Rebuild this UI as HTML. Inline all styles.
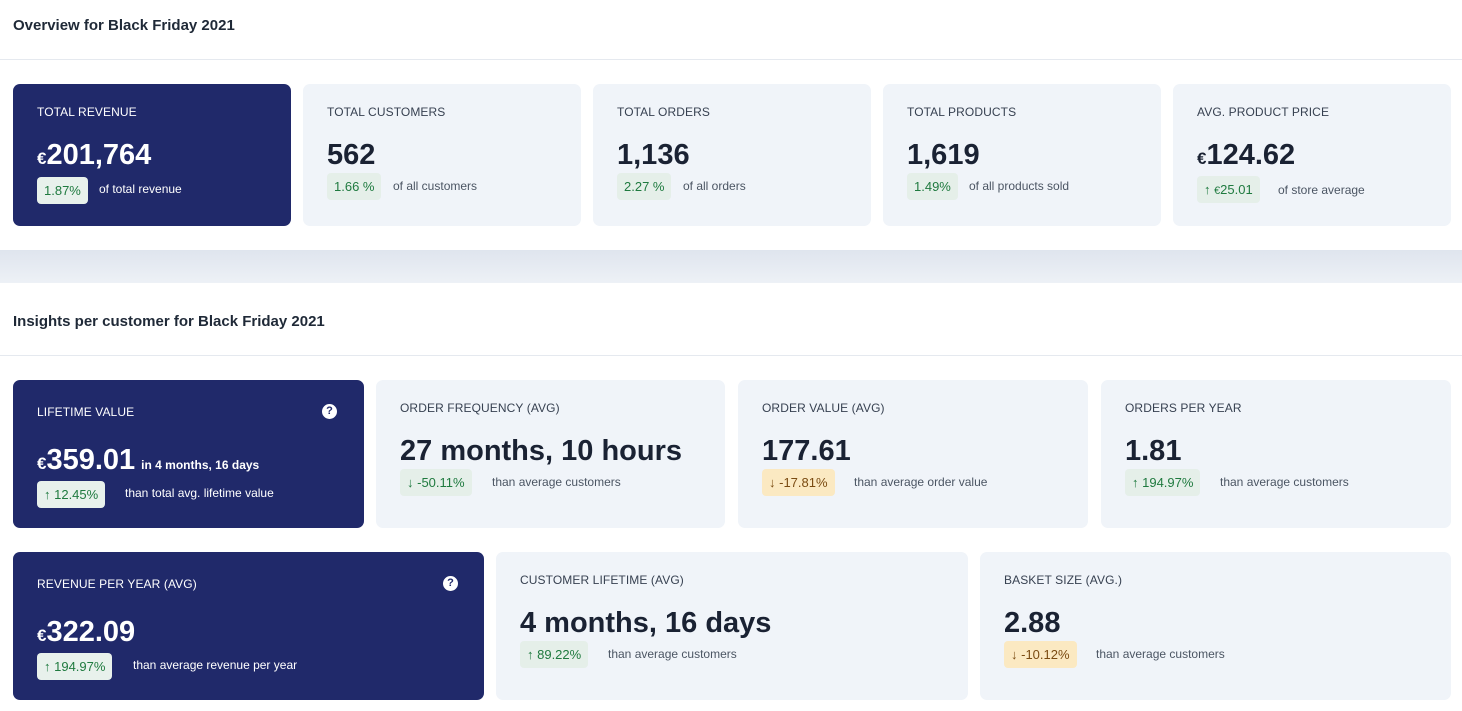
<!DOCTYPE html><html><head><style>
*{box-sizing:border-box;margin:0;padding:0}
body{width:1462px;height:711px;background:#fff;font-family:"Liberation Sans",Arial,sans-serif;color:#1a2233;position:relative;overflow:hidden}
.t{position:absolute;left:13px;font-size:15px;font-weight:bold;color:#1f2937}
.hr{position:absolute;left:0;right:0;height:1px;background:#e5e9ef}
.band{position:absolute;left:0;right:0;top:250px;height:33px;background:linear-gradient(#dfe5ee,#edf1f6)}
.c{position:absolute;border-radius:7px;background:#f0f4f9;padding:0 24px}
.d{background:#20296a;color:#fff}
.l{position:absolute;left:24px;font-size:12px;color:#374151;letter-spacing:.1px}
.d .l{color:#fff}
.v{position:absolute;left:24px;font-size:29px;font-weight:bold;color:#1a2233;white-space:nowrap}
.d .v{color:#fff}
.v small{font-size:17px}
.v em{font-style:normal;font-size:12px;margin-left:6px}
.b{position:absolute;left:24px;height:27px;line-height:27px;padding:0 7px;border-radius:4px;background:#e5efe9;color:#1f7a3f;font-size:13px}
.d .b{background:#e8f1ec}
.y{background:#fbe9c2;color:#7a4b12}
.s{position:absolute;font-size:12px;color:#4b5563}
.d .s{color:#fff}
.q{position:absolute;width:15px;height:15px;border-radius:50%;background:#fff;color:#20296a;font-size:11px;font-weight:bold;text-align:center;line-height:15px}
</style></head><body>
<div class="t" style="top:17px">Overview for Black Friday 2021</div>
<div class="hr" style="top:59px"></div>

<div class="c d" style="left:13px;top:84px;width:278px;height:142px"><div class="l" style="top:21px">TOTAL REVENUE</div><div class="v" style="top:55px"><small>€</small>201,764</div><div class="b" style="top:93px">1.87%</div><div class="s" style="left:86px;top:98px">of total revenue</div></div>
<div class="c" style="left:303px;top:84px;width:278px;height:142px"><div class="l" style="top:21px">TOTAL CUSTOMERS</div><div class="v" style="top:55px">562</div><div class="b" style="top:89px">1.66 %</div><div class="s" style="left:90px;top:95px">of all customers</div></div>
<div class="c" style="left:593px;top:84px;width:278px;height:142px"><div class="l" style="top:21px">TOTAL ORDERS</div><div class="v" style="top:55px">1,136</div><div class="b" style="top:89px">2.27 %</div><div class="s" style="left:90px;top:95px">of all orders</div></div>
<div class="c" style="left:883px;top:84px;width:278px;height:142px"><div class="l" style="top:21px">TOTAL PRODUCTS</div><div class="v" style="top:55px">1,619</div><div class="b" style="top:89px">1.49%</div><div class="s" style="left:86px;top:95px">of all products sold</div></div>
<div class="c" style="left:1173px;top:84px;width:278px;height:142px"><div class="l" style="top:21px">AVG. PRODUCT PRICE</div><div class="v" style="top:55px"><small>€</small>124.62</div><div class="b" style="top:92px">↑ <small>€</small>25.01</div><div class="s" style="left:105px;top:99px">of store average</div></div>

<div class="band"></div>
<div class="t" style="top:313px">Insights per customer for Black Friday 2021</div>
<div class="hr" style="top:355px"></div>

<div class="c d" style="left:13px;top:380px;width:351px;height:148px"><div class="l" style="top:25px">LIFETIME VALUE</div><div class="q" style="left:309px;top:24px">?</div><div class="v" style="top:64px"><small>€</small>359.01<em>in 4 months, 16 days</em></div><div class="b" style="top:101px">↑ 12.45%</div><div class="s" style="left:112px;top:106px">than total avg. lifetime value</div></div>
<div class="c" style="left:376px;top:380px;width:349px;height:148px"><div class="l" style="top:21px">ORDER FREQUENCY (AVG)</div><div class="v" style="top:55px">27 months, 10 hours</div><div class="b" style="top:89px">↓ -50.11%</div><div class="s" style="left:116px;top:95px">than average customers</div></div>
<div class="c" style="left:738px;top:380px;width:350px;height:148px"><div class="l" style="top:21px">ORDER VALUE (AVG)</div><div class="v" style="top:55px">177.61</div><div class="b y" style="top:89px">↓ -17.81%</div><div class="s" style="left:116px;top:95px">than average order value</div></div>
<div class="c" style="left:1101px;top:380px;width:350px;height:148px"><div class="l" style="top:21px">ORDERS PER YEAR</div><div class="v" style="top:55px">1.81</div><div class="b" style="top:89px">↑ 194.97%</div><div class="s" style="left:119px;top:95px">than average customers</div></div>

<div class="c d" style="left:13px;top:552px;width:471px;height:148px"><div class="l" style="top:25px">REVENUE PER YEAR (AVG)</div><div class="q" style="left:430px;top:24px">?</div><div class="v" style="top:64px"><small>€</small>322.09</div><div class="b" style="top:101px">↑ 194.97%</div><div class="s" style="left:120px;top:106px">than average revenue per year</div></div>
<div class="c" style="left:496px;top:552px;width:472px;height:148px"><div class="l" style="top:21px">CUSTOMER LIFETIME (AVG)</div><div class="v" style="top:55px">4 months, 16 days</div><div class="b" style="top:89px">↑ 89.22%</div><div class="s" style="left:112px;top:95px">than average customers</div></div>
<div class="c" style="left:980px;top:552px;width:471px;height:148px"><div class="l" style="top:21px">BASKET SIZE (AVG.)</div><div class="v" style="top:55px">2.88</div><div class="b y" style="top:89px">↓ -10.12%</div><div class="s" style="left:116px;top:95px">than average customers</div></div>
</body></html>
